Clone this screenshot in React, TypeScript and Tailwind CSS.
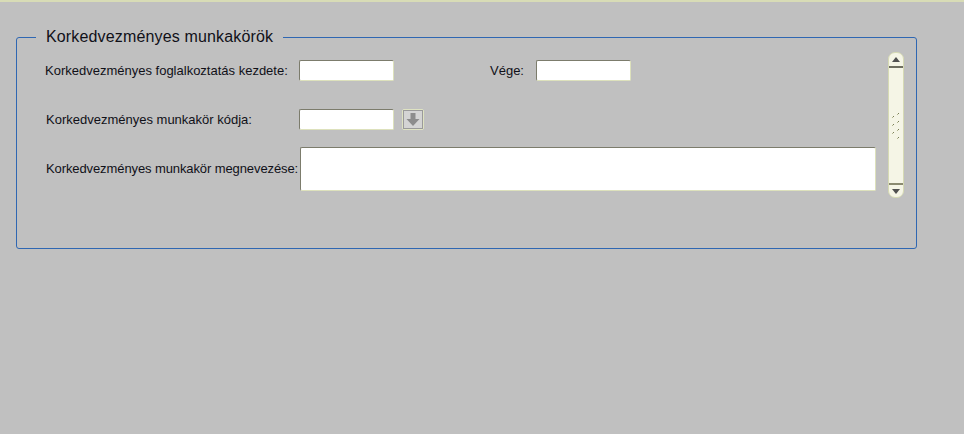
import React from 'react';

const inputCls =
  'h-[21px] w-[95px] shrink-0 rounded-[2px] border border-t-[#7c7c6c] border-l-[#7c7c6c] border-b-[#dde1bc] border-r-[#dde1bc] bg-white outline-none';

const DownButton: React.FC = () => (
  <div className="ml-[8px] flex h-[21px] w-[22px] items-center justify-center rounded-[2px] border border-[#dfe3c2] bg-[#d4d4d4]">
    <div className="flex h-[19px] w-[20px] items-center justify-center border border-[#9a9a9a]">
      <svg width="14" height="15" viewBox="0 0 14 15">
        <path d="M4.5 1h5v6h4l-6.5 7-6.5-7h4z" fill="#8c8c8c" />
      </svg>
    </div>
  </div>
);

const Scrollbar: React.FC = () => (
  <div className="mr-[12px] mt-[5px] flex h-[146px] w-[16px] flex-col overflow-hidden rounded-[7px] border border-[#d6dab4] bg-[#f5f5e6]">
    <div className="flex h-[15px] items-center justify-center border-b-2 border-[#6e6e60]">
      <svg width="8" height="5" viewBox="0 0 8 5">
        <path d="M4 0l4 5H0z" fill="#505050" />
      </svg>
    </div>
    <div className="flex flex-1 items-center justify-center">
      <svg width="10" height="26" viewBox="0 0 10 26">
        {[3, 11, 19].map((y) => (
          <g key={'l' + y}>
            <rect x="1" y={y + 1} width="1" height="1" fill="#b4b890" />
            <rect x="2" y={y} width="1" height="1" fill="#7a7e58" />
          </g>
        ))}
        {[0, 8, 16, 24].map((y) => (
          <g key={'r' + y}>
            <rect x="6" y={y + 1} width="1" height="1" fill="#b4b890" />
            <rect x="7" y={y} width="1" height="1" fill="#7a7e58" />
          </g>
        ))}
      </svg>
    </div>
    <div className="flex h-[14px] items-center justify-center border-t-2 border-[#8a8a70]">
      <svg width="8" height="5" viewBox="0 0 8 5">
        <path d="M0 0h8L4 5z" fill="#505050" />
      </svg>
    </div>
  </div>
);

export default function App() {
  return (
    <div className="h-[434px] w-full bg-[#c0c0c0] font-['Liberation_Sans',Arial,sans-serif] text-[#101018]">
      <div className="h-[2px] bg-[#d8dcb6]" />
      <fieldset className="ml-[16px] mt-[25px] h-[222px] w-[901px] rounded-[3px] border border-[#2f67b2]">
        <legend className="ml-[19px] px-[10px] text-[16px] leading-[20px] tracking-[0.15px]">Korkedvezményes munkakörök</legend>
        <div className="flex items-start justify-between">
          <div className="pl-[28px] pt-[13px] text-[13px]">
            <div className="flex h-[21px] items-center">
              <span className="w-[254px] shrink-0 whitespace-nowrap">Korkedvezményes foglalkoztatás kezdete:</span>
              <input className={inputCls} />
              <span className="ml-[96px] w-[46px] shrink-0">Vége:</span>
              <input className={inputCls} />
            </div>
            <div className="mt-[28px] flex h-[21px] items-center">
              <span className="w-[254px] shrink-0 whitespace-nowrap pl-[1px]">Korkedvezményes munkakör kódja:</span>
              <input className={inputCls} />
              <DownButton />
            </div>
            <div className="mt-[17px] flex h-[44px] items-center">
              <span className="w-[255px] shrink-0 whitespace-nowrap pl-[1px] tracking-[-0.1px]">Korkedvezményes munkakör megnevezése:</span>
              <textarea className="h-[44px] w-[576px] shrink-0 resize-none rounded-[2px] border border-t-[#7c7c6c] border-l-[#7c7c6c] border-b-[#dde1bc] border-r-[#dde1bc] bg-white outline-none" />
            </div>
          </div>
          <Scrollbar />
        </div>
      </fieldset>
    </div>
  );
}
